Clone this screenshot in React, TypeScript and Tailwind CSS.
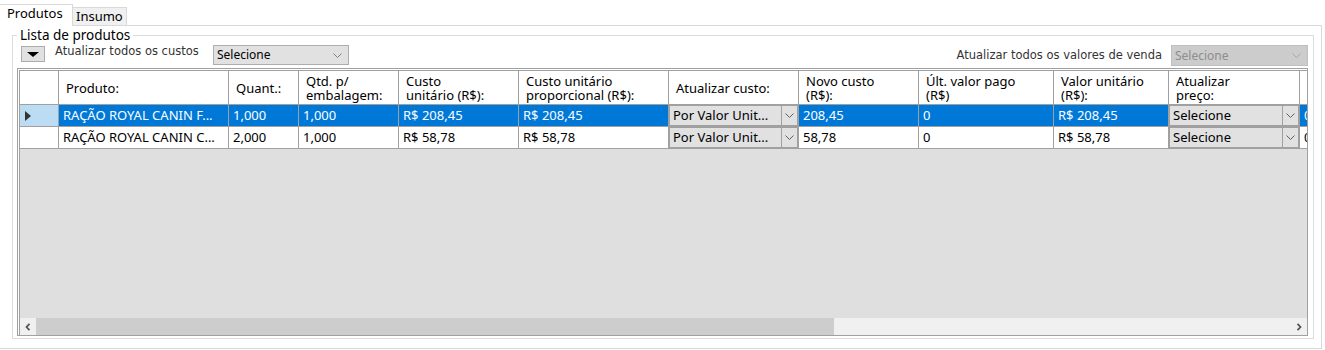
import React from "react";

type Col = {
  w: string;
  head: string[];
  r1: string;
  r2: string;
  combo?: boolean;
};

const cols: Col[] = [
  { w: "w-[170px]", head: ["Produto:"], r1: "RAÇÃO ROYAL CANIN F...", r2: "RAÇÃO ROYAL CANIN C..." },
  { w: "w-[70px]", head: ["Quant.:"], r1: "1,000", r2: "2,000" },
  { w: "w-[100px]", head: ["Qtd. p/", "embalagem:"], r1: "1,000", r2: "1,000" },
  { w: "w-[120px]", head: ["Custo", "unitário (R$):"], r1: "R$ 208,45", r2: "R$ 58,78" },
  { w: "w-[150px]", head: ["Custo unitário", "proporcional (R$):"], r1: "R$ 208,45", r2: "R$ 58,78" },
  { w: "w-[130px]", head: ["Atualizar custo:"], r1: "Por Valor Unit...", r2: "Por Valor Unit...", combo: true },
  { w: "w-[120px]", head: ["Novo custo", "(R$):"], r1: "208,45", r2: "58,78" },
  { w: "w-[135px]", head: ["Últ. valor pago", "(R$)"], r1: "0", r2: "0" },
  { w: "w-[115px]", head: ["Valor unitário", "(R$):"], r1: "R$ 208,45", r2: "R$ 58,78" },
  { w: "w-[131px]", head: ["Atualizar", "preço:"], r1: "Selecione", r2: "Selecione", combo: true },
  { w: "w-[100px]", head: [], r1: "0", r2: "0" },
];

function Chevron({ color = "#606060" }: { color?: string }) {
  return (
    <svg width="9" height="5" viewBox="0 0 9 5">
      <polyline points="0.5,0.5 4.5,4.5 8.5,0.5" fill="none" stroke={color} strokeWidth="1" />
    </svg>
  );
}

function GridCombo({ text }: { text: string }) {
  return (
    <div className="h-full flex border border-[#a0a0a0] bg-[#e1e1e1] text-black">
      <div className="flex-1 pl-[3px] flex items-center overflow-hidden whitespace-nowrap">{text}</div>
      <div className="w-[16px] border-l border-[#a0a0a0] flex items-center justify-center">
        <Chevron />
      </div>
    </div>
  );
}

export default function App() {
  return (
    <div className="w-[1325px] h-[350px] bg-white overflow-hidden font-['Noto_Sans',sans-serif] text-black">
      {/* Tabs */}
      <div className="h-[25px] flex items-end">
        <div className="relative z-10 w-[73px] h-[22px] mb-[-1px] bg-white border-t border-r border-[#d9d9d9] pl-[7px] text-[13px] leading-[16px]">
          Produtos
        </div>
        <div className="w-[54px] h-[18px] bg-[#f0f0f0] border-t border-r border-[#d9d9d9] pl-[3px] text-[13px] leading-[16px]">
          Insumo
        </div>
      </div>

      {/* Tab page */}
      <div className="w-[1322px] h-[324px] border-t border-r border-b border-[#d9d9d9] pt-[9px] pl-[12px]">
        {/* Group box */}
        <div className="relative w-[1302px] h-[304px] border border-[#dcdcdc] pt-[9px] pl-[4px]">
          <span className="absolute left-[4px] top-[-9px] bg-white px-[3px] text-[13.5px] leading-[16px]">
            Lista de produtos
          </span>

          {/* Toolbar */}
          <div className="w-[1291px] h-[20px] pl-[4px] flex items-start">
            <div className="w-[24px] h-[16px] mt-[1px] bg-[#e1e1e1] border border-[#adadad] flex items-center justify-center">
              <svg width="12" height="5" viewBox="0 0 12 5">
                <polygon points="0,0 12,0 6,5" fill="#000" />
              </svg>
            </div>
            <div className="ml-[10px] w-[158px] font-['DejaVu_Sans',sans-serif] text-[11.5px] leading-[13px] text-[#333]">
              Atualizar todos os custos
            </div>
            <div className="w-[136px] h-[20px] bg-[#e1e1e1] border border-[#adadad] flex items-center pl-[3px] pr-[6px] text-[12px]">
              <span className="flex-1">Selecione</span>
              <Chevron color="#808080" />
            </div>
            <div className="flex-1" />
            <div className="self-center mr-[9px] font-['DejaVu_Sans',sans-serif] text-[11.5px] leading-[13px] text-[#333]">
              Atualizar todos os valores de venda
            </div>
            <div className="w-[137px] h-[21px] bg-[#cccccc] border border-[#bfbfbf] flex items-center pl-[3px] pr-[6px] text-[12px] text-[#8d8d8d]">
              <span className="flex-1">Selecione</span>
              <Chevron color="#a8a8a8" />
            </div>
          </div>

          {/* Grid */}
          <div className="mt-[3px] w-[1291px] h-[268px] border border-[#a0a0a0] bg-white pt-px pl-px flex flex-col">
            <div className="flex-1 border-t border-l border-[#a0a0a0] bg-[#dfdfdf] overflow-hidden flex flex-col text-[13px]">
              {/* Header */}
              <div className="h-[34px] flex shrink-0">
                <div className="w-[39px] shrink-0 bg-white border-r border-b border-[#a0a0a0]" />
                {cols.map((c, i) => (
                  <div
                    key={i}
                    className={`${c.w} shrink-0 bg-white border-r border-b border-[#a0a0a0] pl-[7px] flex flex-col justify-center leading-[14px] whitespace-nowrap overflow-hidden`}
                  >
                    {c.head.map((h, j) => (
                      <div key={j}>{h}</div>
                    ))}
                  </div>
                ))}
              </div>

              {/* Row 1 (selected) */}
              <div className="h-[22px] flex shrink-0">
                <div className="w-[39px] shrink-0 bg-[#bcdcf4] border-r border-b border-[#a0a0a0] flex items-center pl-[5px]">
                  <svg width="6" height="10" viewBox="0 0 6 10">
                    <polygon points="0,0 6,5 0,10" fill="#333" />
                  </svg>
                </div>
                {cols.map((c, i) =>
                  c.combo ? (
                    <div key={i} className={`${c.w} shrink-0 border-r border-b border-[#a0a0a0] bg-white`}>
                      <GridCombo text={c.r1} />
                    </div>
                  ) : (
                    <div
                      key={i}
                      className={`${c.w} shrink-0 bg-[#0078d7] text-white border-r border-b border-[#a0a0a0] pl-[4px] flex items-center whitespace-nowrap overflow-hidden`}
                    >
                      {c.r1}
                    </div>
                  )
                )}
              </div>

              {/* Row 2 */}
              <div className="h-[22px] flex shrink-0">
                <div className="w-[39px] shrink-0 bg-white border-r border-b border-[#a0a0a0]" />
                {cols.map((c, i) =>
                  c.combo ? (
                    <div key={i} className={`${c.w} shrink-0 border-r border-b border-[#a0a0a0] bg-white`}>
                      <GridCombo text={c.r2} />
                    </div>
                  ) : (
                    <div
                      key={i}
                      className={`${c.w} shrink-0 bg-white border-r border-b border-[#a0a0a0] pl-[4px] flex items-center whitespace-nowrap overflow-hidden`}
                    >
                      {c.r2}
                    </div>
                  )
                )}
              </div>

              <div className="flex-1" />

              {/* Horizontal scrollbar */}
              <div className="h-[17px] shrink-0 flex bg-[#f0f0f0]">
                <div className="w-[16px] flex items-center justify-center">
                  <svg width="6" height="8" viewBox="0 0 6 8">
                    <polyline points="4.5,0.8 1.5,4 4.5,7.2" fill="none" stroke="#555" strokeWidth="1.8" />
                  </svg>
                </div>
                <div className="w-[798px] bg-[#cdcdcd]" />
                <div className="flex-1" />
                <div className="w-[17px] flex items-center justify-center">
                  <svg width="6" height="8" viewBox="0 0 6 8">
                    <polyline points="1.5,0.8 4.5,4 1.5,7.2" fill="none" stroke="#555" strokeWidth="1.8" />
                  </svg>
                </div>
              </div>
            </div>
          </div>
        </div>
      </div>
    </div>
  );
}
